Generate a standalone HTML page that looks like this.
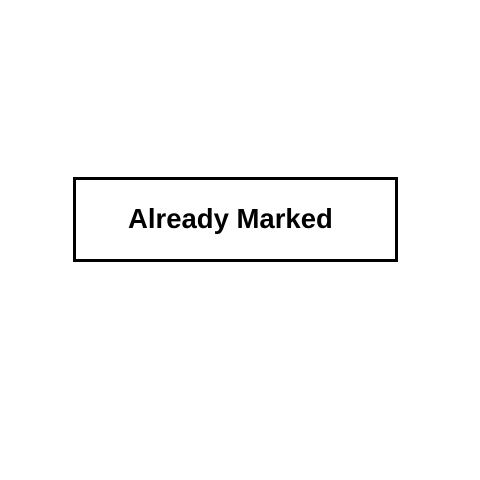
<!DOCTYPE html>
<html><head><style>
html,body{margin:0;padding:0;background:#fff;width:480px;height:480px;overflow:hidden}
.box{position:absolute;left:73px;top:177px;width:319px;height:79px;border:3px solid #000;}
.t{position:absolute;left:128px;top:204px;font-family:"Liberation Sans",sans-serif;font-weight:bold;font-size:27.5px;letter-spacing:0px;line-height:30px;white-space:nowrap;color:#000}
</style></head><body>
<div class="box"></div>
<div class="t">Already Marked</div>
</body></html>
